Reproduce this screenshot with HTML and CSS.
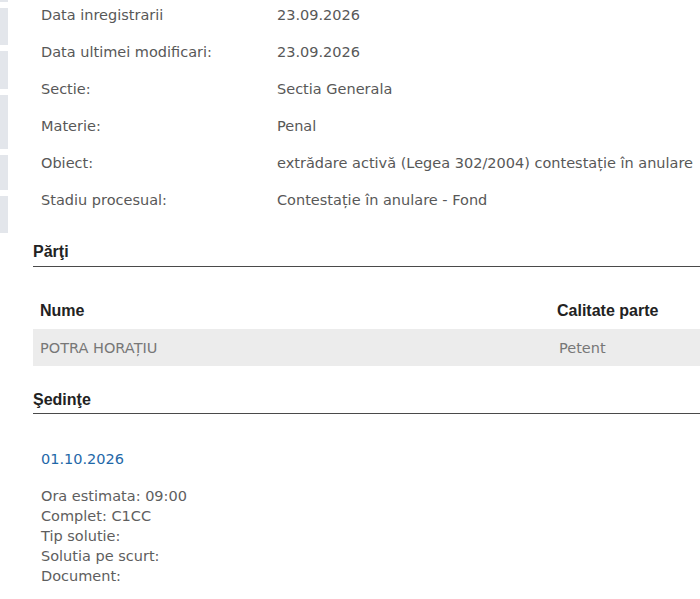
FILE: index.html
```html
<!DOCTYPE html>
<html lang="ro">
<head>
<meta charset="utf-8">
<title>Dosar</title>
<link rel="stylesheet" href="styles.css">
</head>
<body>
<div class="page">
  <div class="top">
    <div class="rail">
      <span class="blk b1"></span>
      <span class="blk b2"></span>
      <span class="blk b3"></span>
      <span class="blk b4"></span>
      <span class="blk b5"></span>
      <span class="blk b6"></span>
    </div>
    <dl class="info">
      <dt>Data inregistrarii</dt><dd>23.09.2026</dd>
      <dt>Data ultimei modificari:</dt><dd>23.09.2026</dd>
      <dt>Sectie:</dt><dd>Sectia Generala</dd>
      <dt>Materie:</dt><dd>Penal</dd>
      <dt>Obiect:</dt><dd>extrădare activă (Legea 302/2004) contestație în anulare</dd>
      <dt>Stadiu procesual:</dt><dd>Contestație în anulare - Fond</dd>
    </dl>
  </div>

  <section class="section section-parties">
    <h2 class="heading">Părţi</h2>
    <table class="parties">
      <thead>
        <tr><th class="c-name">Nume</th><th class="c-role">Calitate parte</th></tr>
      </thead>
      <tbody>
        <tr class="row-alt"><td class="c-name">POTRA HORAȚIU</td><td class="c-role">Petent</td></tr>
      </tbody>
    </table>
  </section>

  <section class="section section-hearings">
    <h2 class="heading">Şedinţe</h2>
    <div class="hearing">
      <div class="hearing-date">01.10.2026</div>
      <div class="hearing-details">
        <div>Ora estimata: 09:00</div>
        <div>Complet: C1CC</div>
        <div>Tip solutie:</div>
        <div>Solutia pe scurt:</div>
        <div>Document:</div>
      </div>
    </div>
  </section>
</div>
</body>
</html>
```

FILE: styles.css
```css
* { box-sizing: border-box; }
html, body { margin: 0; padding: 0; background: #fff; }
body {
  font-family: "DejaVu Sans", Verdana, sans-serif;
  font-size: 14.5px;
  color: #585858;
  overflow: hidden;
}
.page { width: 700px; }

.top {
  display: flex;
  margin-top: -4px;
}
.rail {
  width: 8px;
  flex: 0 0 8px;
  display: flex;
  flex-direction: column;
  gap: 6px;
}
.blk { display: block; background: #e3e6eb; }
.b1 { height: 6px; }
.b2 { height: 37px; }
.b3 { height: 38px; }
.b4 { height: 54px; }
.b5 { height: 35px; }
.b6 { height: 37px; }

.info {
  margin: 0 0 0 33px;
  display: grid;
  grid-template-columns: 236px 1fr;
  grid-auto-rows: 37px;
  align-items: center;
  white-space: nowrap;
}
.info dt, .info dd { margin: 0; }

.section { margin-left: 33px; }
.heading {
  margin: 0;
  font-family: "Liberation Sans", Arial, sans-serif;
  font-size: 16px;
  font-weight: bold;
  color: #222;
  border-bottom: 1px solid #4a4a4a;
}
.section-parties .heading { padding: 10px 0 5px; }

.parties {
  width: 100%;
  border-collapse: collapse;
  margin-top: 25px;
}
.parties th {
  font-family: "Liberation Sans", Arial, sans-serif;
  font-size: 16px;
  font-weight: bold;
  color: #222;
  text-align: left;
  height: 37px;
  padding: 0 0 0 7px;
}
.parties td {
  height: 37px;
  padding: 0 0 0 7px;
  color: #777;
}
.parties .c-role { width: 143px; padding-left: 0; }
.parties td.c-role { padding-left: 2px; }
.row-alt { background: #ececec; }

.section-hearings .heading { margin-top: 25px; padding-bottom: 4px; }

.hearing { padding-left: 8px; }
.hearing-date {
  color: #1f68a8;
  margin-top: 35px;
  line-height: 20px;
}
.hearing-details {
  margin-top: 17px;
  line-height: 20px;
  color: #5e5e5e;
}
```
